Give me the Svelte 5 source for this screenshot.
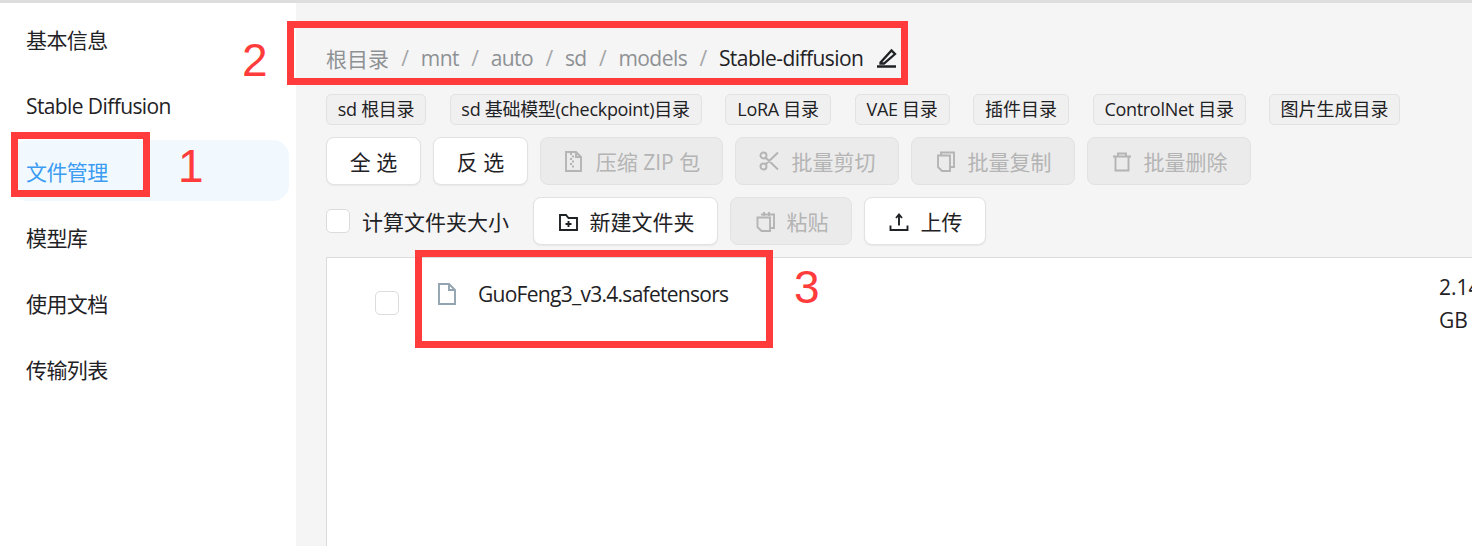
<script>
  let navItems = ['基本信息', 'Stable Diffusion', '文件管理', '模型库', '使用文档', '传输列表']
  let activeNav = '文件管理'
  let crumbs = ['根目录', 'mnt', 'auto', 'sd', 'models']
  let shortcuts = ['sd 根目录', 'sd 基础模型(checkpoint)目录', 'LoRA 目录', 'VAE 目录', '插件目录', 'ControlNet 目录', '图片生成目录']

  function cjkOnly(s) {
    return !/[a-z]/i.test(s)
  }

  const icons = {
    zip: 'M3 2h10l5 5v14H3z M13 2v5h5 M7 4h2 M9 6.500h2 M7 9h2 M9 11.500h2 M7 14h2 M9 16.500h2',
    cut: 'M7 8 19 19.500 M7 14 19 2.500 M7.500 5.500a3 3 0 1 1-6 0a3 3 0 0 1 6 0z M7.500 16.500a3 3 0 1 1-6 0a3 3 0 0 1 6 0z',
    copy: 'M6 5V2.500h13V17h-4 M3 5.500h12V21H7l-4-4z',
    del: 'M2 6.500h18 M7 6.500V3.500h8v3 M4.500 6.500V20.500h13V6.500',
    folder: 'M3 5h6l2.500 3H20v12H3z M11.500 11v6 M8.500 14h6',
    paste: 'M7 4.500h13V18h-4 M10 2v4 M15 2v4 M3.500 7.500h12.500V21H7.500l-4-4z',
    upload: 'M11 15.500V5 M8 8l3-3.500L14 8 M2.500 15.500V20h17v-4.500'
  }
</script>

{#snippet icon(name)}
  <svg class="icon" viewBox="0 0 22 22" aria-hidden="true"><path d={icons[name]} /></svg>
{/snippet}

<div class="page">
  <aside class="sidebar">
    {#each navItems as item}
      <div class="nav-item" class:active={item === activeNav}>{item}</div>
    {/each}
  </aside>

  <main class="main">
    <div class="crumbs">
      {#each crumbs as crumb}
        <span class="crumb">{crumb}</span>
        <span class="sep">/</span>
      {/each}
      <span class="current">Stable-diffusion</span>
      <svg class="pen" viewBox="0 0 22 22" aria-hidden="true">
        <path d="M4.500 15.500 15.500 3.500 19 7 8 16.500H4.500z M1 19.500h19" />
      </svg>
    </div>

    <div class="shortcuts">
      {#each shortcuts as s}
        <span class="tag" class:plain={cjkOnly(s)}>{s}</span>
      {/each}
    </div>

    <div class="toolbar">
      <button class="btn select">全 选</button>
      <button class="btn select">反 选</button>
      <button class="btn zip" disabled>{@render icon('zip')}压缩 ZIP 包</button>
      <button class="btn wide" disabled>{@render icon('cut')}批量剪切</button>
      <button class="btn wide" disabled>{@render icon('copy')}批量复制</button>
      <button class="btn wide" disabled>{@render icon('del')}批量删除</button>
    </div>

    <div class="toolbar">
      <label class="calc"><span class="box"></span>计算文件夹大小</label>
      <button class="btn newdir">{@render icon('folder')}新建文件夹</button>
      <button class="btn short" disabled>{@render icon('paste')}粘贴</button>
      <button class="btn short">{@render icon('upload')}上传</button>
    </div>

    <div class="table">
      <div class="row">
        <span class="box"></span>
        <div class="name">
          <svg class="file" viewBox="0 0 18 22" aria-hidden="true">
            <path d="M1 1h10l6 6v14H1z M11 1v6h6" />
          </svg>
          <span>GuoFeng3_v3.4.safetensors</span>
        </div>
        <div class="size">2.14 GB</div>
      </div>
    </div>
  </main>

  <!-- red annotations drawn over the screenshot -->
  <div class="mark m1"></div>
  <div class="mark m2"></div>
  <div class="mark m3"></div>
  <span class="num n1">1</span>
  <span class="num n2">2</span>
  <span class="num n3">3</span>
</div>

<style>
  :global(body) {
    margin: 0;
  }

  .page {
    position: relative;
    display: flex;
    width: 1472px;
    height: 546px;
    overflow: hidden;
    box-sizing: border-box;
    border-top: 3px solid #dedede;
    background: #fff;
    color: #1f2225;
    font-family: "Open Sans", "Noto Sans CJK SC", sans-serif;
    font-size: 21px;
  }

  .sidebar {
    flex: 0 0 296px;
    box-sizing: border-box;
    padding: 5px 7px 0 11px;
  }

  .nav-item {
    box-sizing: border-box;
    height: 61px;
    margin-bottom: 5px;
    padding: 2px 0 0 15px;
    line-height: 60px;
    border-radius: 16px;
    white-space: nowrap;
    letter-spacing: -0.6px;
  }

  .nav-item.active {
    background: #f1f9fe;
    color: #3b9cf2;
  }

  .main {
    flex: 1;
    min-width: 0;
    padding-left: 30px;
    background: #f5f5f5;
  }

  .crumbs {
    display: flex;
    align-items: center;
    height: 40px;
    margin-top: 35px;
    white-space: nowrap;
    letter-spacing: -0.55px;
  }

  .crumb {
    color: #8e9194;
  }

  .crumb:first-child {
    letter-spacing: 0;
  }

  .sep {
    margin: 0 12.300px;
    color: #a4a6a8;
  }

  .pen {
    flex: none;
    width: 22px;
    height: 22px;
    margin-left: 13px;
    fill: none;
    stroke: #1f2225;
    stroke-width: 2.3;
  }

  .shortcuts {
    display: grid;
    grid-template-columns: 100px 252px 106px 95px 96px 153px 131px;
    gap: 23.500px;
    margin-top: 16px;
  }

  .tag {
    box-sizing: border-box;
    height: 31px;
    line-height: 29px;
    font-size: 18px;
    letter-spacing: -0.3px;
    text-align: center;
    white-space: nowrap;
    background: #f0f0f0;
    border: 1px solid #e2e2e2;
    border-radius: 5px;
  }

  .tag.plain {
    letter-spacing: 0;
  }

  .toolbar {
    display: flex;
    align-items: center;
    gap: 12px;
    margin-top: 12px;
  }

  .btn {
    display: flex;
    align-items: center;
    justify-content: center;
    gap: 11px;
    box-sizing: border-box;
    height: 48px;
    padding: 0;
    color: #1f2225;
    font: inherit;
    white-space: nowrap;
    background: #fff;
    border: 1px solid #e2e2e2;
    border-radius: 8px;
    box-shadow: 0 1px 2px rgba(0, 0, 0, 0.06);
  }

  .btn:disabled {
    color: #b4b4b4;
    background: #ebebeb;
    box-shadow: none;
  }

  .select {
    width: 95px;
  }

  .zip {
    width: 183px;
  }

  .wide {
    width: 164px;
  }

  .newdir {
    width: 185px;
  }

  .short {
    width: 122px;
  }

  .icon {
    flex: none;
    width: 22px;
    height: 22px;
    fill: none;
    stroke: currentColor;
    stroke-width: 1.9;
  }

  .calc {
    display: flex;
    align-items: center;
    gap: 12px;
    width: 195px;
    white-space: nowrap;
  }

  .box {
    flex: none;
    box-sizing: border-box;
    width: 24px;
    height: 24px;
    background: #fff;
    border: 1px solid #dcdcdc;
    border-radius: 5px;
  }

  .table {
    width: 1200px;
    height: 400px;
    margin-top: 12px;
    background: #fff;
    border-top: 1px solid #dcdcdc;
    border-left: 1px solid #dcdcdc;
  }

  .row {
    display: flex;
    padding-left: 48px;
  }

  .row .box {
    margin-top: 33px;
  }

  .name {
    display: flex;
    flex: none;
    align-items: center;
    gap: 22px;
    width: 1001px;
    height: 24px;
    margin-top: 24px;
    margin-left: 39px;
    letter-spacing: -0.72px;
  }

  .file {
    flex: none;
    width: 18px;
    height: 22px;
    fill: none;
    stroke: #93a4b0;
    stroke-width: 1.9;
  }

  .size {
    width: 50px;
    margin-top: 13px;
    line-height: 33px;
  }

  .mark {
    position: absolute;
    box-sizing: border-box;
    border: 7px solid #ff3b3b;
  }

  .m1 {
    left: 11px;
    top: 129px;
    width: 139px;
    height: 65px;
  }

  .m2 {
    left: 287px;
    top: 18px;
    width: 621px;
    height: 64px;
  }

  .m3 {
    left: 415px;
    top: 247px;
    width: 358px;
    height: 98px;
  }

  .num {
    position: absolute;
    color: #ff3b3b;
    font-family: "Liberation Sans", sans-serif;
    font-size: 46px;
    line-height: 46px;
  }

  .n1 {
    left: 178px;
    top: 140px;
  }

  .n2 {
    left: 242px;
    top: 34px;
  }

  .n3 {
    left: 794px;
    top: 261px;
  }
</style>
